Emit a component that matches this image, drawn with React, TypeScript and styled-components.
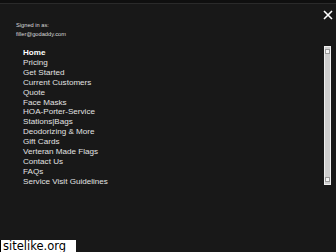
import React from "react";
import styled, { createGlobalStyle } from "styled-components";

const Global = createGlobalStyle`
  html, body { margin: 0; padding: 0; background: #181818; }
  body { font-family: "Liberation Sans", Arial, sans-serif; }
`;

const Page = styled.div`
  width: 336px;
  height: 252px;
  background: #181818;
  position: relative;
  overflow: hidden;
  display: flex;
  flex-direction: column;
`;

const TopStrip = styled.div`
  height: 3px;
  background: #0f0f0f;
  border-bottom: 1px solid #2a2a2a;
  flex: none;
`;

const Header = styled.div`
  display: flex;
  justify-content: space-between;
  align-items: flex-start;
  padding: 0 2px 0 16px;
`;

const Account = styled.div`
  padding-top: 17px;
  color: #d8d8d8;
  font-size: 5.7px;
  line-height: 9px;
`;

const Close = styled.button`
  background: none;
  border: none;
  padding: 0;
  margin-top: 5px;
  width: 12px;
  height: 12px;
  display: flex;
  align-items: center;
  justify-content: center;
  cursor: pointer;
`;

const Body = styled.div`
  display: flex;
  padding: 9px 5px 0 23px;
`;

const Menu = styled.ul`
  list-style: none;
  margin: 0;
  padding: 0;
  flex: 1;
`;

const Item = styled.li<{ $active?: boolean }>`
  font-size: 8.1px;
  line-height: 9.9px;
  color: ${(p) => (p.$active ? "#ffffff" : "#e2e2e2")};
  font-weight: ${(p) => (p.$active ? 700 : 400)};
  white-space: nowrap;
`;

const ScrollBar = styled.div`
  width: 7px;
  margin-top: -2px;
  height: 139px;
  background: #cfcfcf;
  border: 1px solid #f0f0f0;
  box-sizing: border-box;
  display: flex;
  flex-direction: column;
  justify-content: space-between;
  align-items: center;
  padding: 2px 0;
`;

const ScrollArrow = styled.div`
  width: 3px;
  height: 3px;
  background: #f4f4f4;
  border: 1px solid #9a9a9a;
`;

const Watermark = styled.div`
  position: absolute;
  left: 0;
  bottom: 0;
  width: 76px;
  height: 12px;
  background: #ffffff;
  color: #000;
  font-family: "DejaVu Sans", sans-serif;
  font-size: 11.5px;
  line-height: 12px;
  padding-left: 2px;
  box-sizing: border-box;
  border-left: 1px solid #000;
`;

const items = [
  "Pricing",
  "Get Started",
  "Current Customers",
  "Quote",
  "Face Masks",
  "HOA-Porter-Service",
  "Stations|Bags",
  "Deodorizing & More",
  "Gift Cards",
  "Verteran Made Flags",
  "Contact Us",
  "FAQs",
  "Service Visit Guidelines",
];

export default function App() {
  return (
    <>
      <Global />
      <Page>
        <TopStrip />
        <Header>
          <Account>
            <div>Signed in as:</div>
            <div>filler@godaddy.com</div>
          </Account>
          <Close aria-label="Close">
            <svg width="10" height="10" viewBox="0 0 10 10">
              <path d="M1 1L9 9M9 1L1 9" stroke="#ffffff" strokeWidth="1.6" />
            </svg>
          </Close>
        </Header>
        <Body>
          <Menu>
            <Item $active>Home</Item>
            {items.map((t) => (
              <Item key={t}>{t}</Item>
            ))}
          </Menu>
          <ScrollBar>
            <ScrollArrow />
            <ScrollArrow />
          </ScrollBar>
        </Body>
        <Watermark>sitelike.org</Watermark>
      </Page>
    </>
  );
}
